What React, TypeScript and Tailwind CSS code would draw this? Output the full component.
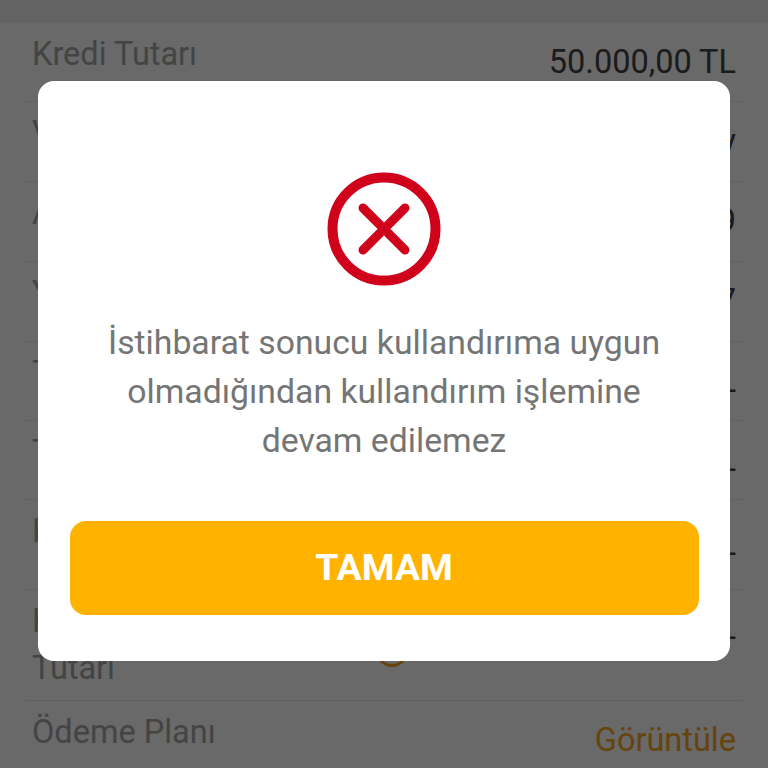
import React from 'react';

interface Row {
  label: string;
  value: string;
  height: string;
  valueTop: string;
  accent?: boolean;
  info?: boolean;
}

const rows: Row[] = [
  { label: 'Kredi Tutarı', value: '50.000,00 TL', height: 'h-[79px]', valueTop: 'mt-[20px]' },
  { label: 'Vade', value: '36 Ay', height: 'h-[80px]', valueTop: 'mt-[20px]' },
  { label: 'Aylık Faiz', value: '1,99', height: 'h-[80px]', valueTop: 'mt-[20px]' },
  { label: 'Yıllık Faiz', value: '26,97', height: 'h-[80px]', valueTop: 'mt-[20px]' },
  { label: 'Toplam Faiz', value: '-', height: 'h-[79px]', valueTop: 'mt-[29px]' },
  { label: 'Toplam Vergi', value: '-', height: 'h-[79px]', valueTop: 'mt-[29px]' },
  { label: 'Kesinti', value: '-', height: 'h-[90px]', valueTop: 'mt-[34px]' },
  { label: 'Kullandırılacak Tutarı', value: '-', height: 'h-[111px]', valueTop: 'mt-[28px]', info: true },
  { label: 'Ödeme Planı', value: 'Görüntüle', height: 'h-[68px]', valueTop: 'mt-[20px]', accent: true },
];

const ErrorIcon = () => (
  <svg width="114" height="114" viewBox="0 0 114 114" fill="none">
    <circle cx="57" cy="57" r="51.5" stroke="#D0021B" strokeWidth="10" />
    <path d="M36 36L78 78M78 36L36 78" stroke="#D0021B" strokeWidth="9" strokeLinecap="round" />
  </svg>
);

export default function App() {
  return (
    <div className="relative h-[768px] w-[768px] overflow-hidden bg-white font-['Roboto',sans-serif]">
      <div className="h-[23px] bg-[#f0f0f0]" />
      <div className="px-[25px]">
        {rows.map((row) => (
          <div key={row.label} className={`relative flex justify-between border-b border-[#ebebeb] px-[7px] ${row.height}`}>
            <span className="mt-[8px] w-[200px] text-[32.5px] leading-[47px] text-[#a6a6a6]">{row.label}</span>
            {row.info && (
              <span className="absolute left-[351px] top-[45px] h-[32px] w-[32px] rounded-full border-[3px] border-[#f5a623]" />
            )}
            <span className={`${row.valueTop} text-[32.5px] leading-[38px] ${row.accent ? 'text-[#f5a623]' : 'text-[#424242]'}`}>
              {row.value}
            </span>
          </div>
        ))}
      </div>

      <div className="absolute inset-0 flex items-start justify-center bg-black/[0.59] pt-[81px]">
        <div className="flex h-[580px] w-[692px] flex-col items-center rounded-2xl bg-white px-[32px] pt-[91px]">
          <ErrorIcon />
          <p className="mt-[32px] w-full text-center text-[33.75px] leading-[49px] text-[#757575]">
            İstihbarat sonucu kullandırıma uygun
            <br />
            olmadığından kullandırım işlemine
            <br />
            devam edilemez
          </p>
          <button className="mt-[56px] h-[94px] w-[629px] shrink-0 rounded-2xl bg-[#ffb300] pb-[2px] text-[37.5px] font-bold text-white">
            TAMAM
          </button>
        </div>
      </div>
    </div>
  );
}
